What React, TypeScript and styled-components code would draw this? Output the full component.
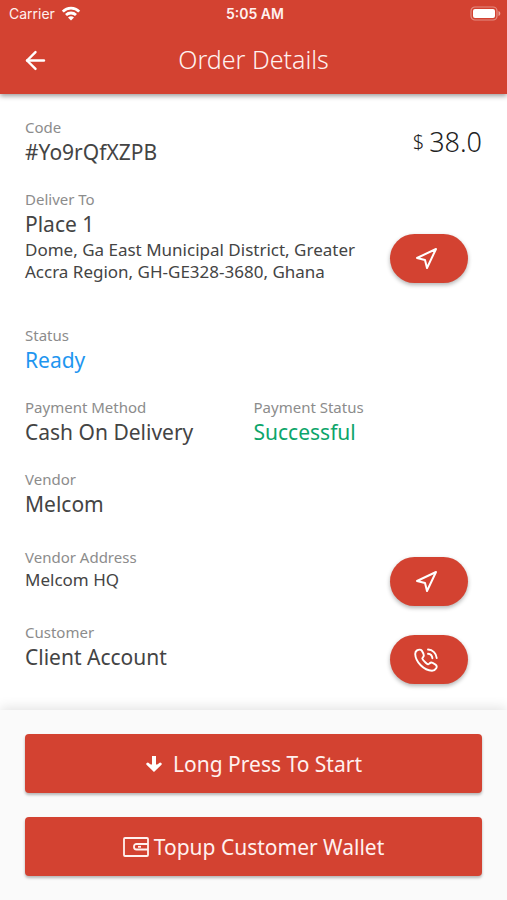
import React from 'react';
import styled, { createGlobalStyle } from 'styled-components';
import { FiArrowLeft, FiNavigation } from 'react-icons/fi';

const brand = '#d34231';
const gutter = '25px';

const GlobalStyle = createGlobalStyle`
  *, *::before, *::after { box-sizing: border-box; }
  body {
    margin: 0;
    background: #fff;
    color: #444;
    font-family: 'Noto Sans', 'Open Sans', sans-serif;
    font-weight: 400;
  }
  button { font: inherit; border: 0; cursor: pointer; }
`;

const Screen = styled.div`
  min-height: 100vh;
  display: flex;
  flex-direction: column;
`;

const Header = styled.header`
  background: ${brand};
  color: #fff1ef;
  box-shadow: 0 2px 5px rgba(0, 0, 0, 0.4);
`;

const StatusBar = styled.div`
  display: grid;
  grid-template-columns: 1fr auto 1fr;
  align-items: center;
  height: 27px;
  padding: 0 6px 0 9px;
  font: 400 14px/20px Inter, sans-serif;
`;

const Carrier = styled.span`
  display: flex;
  align-items: center;
  gap: 6px;
`;

const Clock = styled.time`
  font-weight: 600;
`;

const Battery = styled.svg`
  justify-self: end;
`;

const AppBar = styled.div`
  display: grid;
  grid-template-columns: 48px 1fr 48px;
  align-items: center;
  height: 67px;
  padding: 0 11px;
`;

const BackButton = styled.button`
  display: grid;
  place-items: center;
  width: 48px;
  height: 48px;
  padding: 0;
  background: transparent;
  color: #fff;
`;

const Title = styled.h1`
  margin: 0;
  padding-bottom: 4px;
  text-align: center;
  font-size: 25px;
  line-height: 32px;
  font-weight: 300;
`;

const Details = styled.main`
  flex: 1;
  display: flex;
  flex-direction: column;
  padding: 23px ${gutter};
`;

const Row = styled.section<{ $gap?: number; $center?: boolean }>`
  display: flex;
  justify-content: space-between;
  align-items: ${(p) => (p.$center ? 'center' : 'flex-start')};
  margin-bottom: ${(p) => p.$gap ?? 22}px;
`;

const Columns = styled.section`
  display: grid;
  grid-template-columns: 1fr 1fr;
  margin-bottom: 22px;
`;

const Field = styled.dl`
  flex: 1;
  margin: 0;
  min-width: 0;
`;

const Label = styled.dt`
  padding-bottom: 2px;
  font-size: 15px;
  line-height: 20px;
  color: #8c8c8c;
`;

const Value = styled.dd<{ $tone?: string }>`
  margin: 0;
  padding-bottom: 2px;
  font-size: 21px;
  line-height: 26px;
  color: ${(p) => p.$tone ?? 'inherit'};
`;

const Address = styled.dd`
  margin: 0;
  max-width: 350px;
  font-size: 17px;
  line-height: 22px;
`;

const Price = styled.p`
  display: flex;
  align-items: center;
  gap: 5px;
  margin: 0;
  font-size: 27px;
  line-height: 32px;
  font-weight: 300;
  color: #222;
`;

const Currency = styled.span`
  font-size: 20px;
`;

const PillButton = styled.button<{ $top?: number }>`
  display: grid;
  place-items: center;
  align-self: flex-end;
  flex: none;
  width: 78px;
  height: 49px;
  margin: ${(p) => p.$top ?? 10}px 14px 0 0;
  padding: 0 6px 0 0;
  border-radius: 25px;
  background: ${brand};
  color: #fff;
  box-shadow: 0 2px 4px rgba(0, 0, 0, 0.3);
`;

const Actions = styled.footer`
  display: flex;
  flex-direction: column;
  gap: 24px;
  padding: 24px ${gutter};
  background: #fafafa;
  box-shadow: 0 -2px 12px rgba(0, 0, 0, 0.12);
`;

const ActionButton = styled.button<{ $gap: number }>`
  display: flex;
  align-items: center;
  justify-content: center;
  gap: ${(p) => p.$gap}px;
  height: 59px;
  border-radius: 4px;
  background: ${brand};
  color: #fff1ef;
  font-size: 21px;
  line-height: 28px;
  box-shadow: 0 2px 3px rgba(0, 0, 0, 0.28);
`;

function WifiIcon() {
  return (
    <svg width="20" height="16" viewBox="0 0 20 16" fill="none" stroke="#fff" strokeWidth="2.8" aria-hidden="true">
      <path d="M1.800 5.600C6.300 .9 13.700 .9 18.200 5.600" />
      <path d="M5 9C7.800 6.300 12.200 6.300 15 9" />
      <path d="M10 14.400L7 11.400Q10 8.900 13 11.400Z" fill="#fff" stroke="none" />
    </svg>
  );
}

function BatteryIcon() {
  return (
    <Battery width="31" height="15" viewBox="0 0 31 15" role="img" aria-label="Battery full">
      <rect x="1" y="1" width="26" height="13" rx="4" fill="none" stroke="#fff" strokeOpacity="0.4" strokeWidth="1.200" />
      <rect x="3" y="3" width="22" height="9" rx="2" fill="#fff" />
      <path d="M28.500 5v5c1.200-.5 1.800-1.400 1.800-2.500s-.6-2-1.800-2.500z" fill="#fff" fillOpacity="0.5" />
    </Battery>
  );
}

function PhoneIcon() {
  return (
    <svg width="24" height="24" viewBox="0 0 24 24" fill="none" stroke="currentColor" strokeWidth="1.900" strokeLinecap="round" strokeLinejoin="round" aria-hidden="true">
      <path d="M3 2.400C1.800 3.200 1.200 4.300 1.200 6C1.500 14 10 22.500 18 22.800C20 22.800 21.500 21.500 22.200 20.300C22.900 19 22.800 17.500 21.500 16.600L18.500 14.800C17.300 14.200 16.300 14.600 15.500 15.500C14.600 16.600 13.500 16.400 12 15C10.500 13.600 8.600 12 8.300 10.600C8.200 9.600 9.800 9.200 9.800 7.600C9.800 6.500 8.600 3.800 7.800 2.600C6.800 1.200 4.500 1.400 3 2.400Z" />
      <path d="M14 1.500A9 9 0 0 1 22.700 10" />
      <path d="M14 5.800A5 5 0 0 1 18.400 10.200" />
    </svg>
  );
}

function ArrowDownIcon() {
  return (
    <svg width="18" height="18" viewBox="0 0 18 18" fill="none" stroke="#fff" aria-hidden="true">
      <path d="M9 1v11" strokeWidth="4" />
      <path d="M2.800 9L9 15L15.200 9" strokeWidth="3" strokeLinecap="round" />
      <path d="M4 9.500H14L9 15Z" fill="#fff" stroke="none" />
    </svg>
  );
}

function WalletIcon() {
  return (
    <svg width="26" height="20" viewBox="0 0 26 20" fill="none" stroke="#fff1ef" strokeWidth="1.800" strokeLinejoin="round" aria-hidden="true">
      <rect x="1" y="1" width="24" height="18" rx="1" />
      <path d="M25 7H13.500a2.500 2.500 0 0 0-2.500 2.500v.5a2.500 2.500 0 0 0 2.500 2.500H25" />
      <path d="M15 9.800h3" />
    </svg>
  );
}

export default function App() {
  return (
    <Screen>
      <GlobalStyle />
      <Header>
        <StatusBar>
          <Carrier>Carrier <WifiIcon /></Carrier>
          <Clock>5:05 AM</Clock>
          <BatteryIcon />
        </StatusBar>
        <AppBar>
          <BackButton type="button" aria-label="Back"><FiArrowLeft size={29} /></BackButton>
          <Title>Order Details</Title>
        </AppBar>
      </Header>

      <Details>
        <Row $center>
          <Field><Label>Code</Label><Value>#Yo9rQfXZPB</Value></Field>
          <Price><Currency>$</Currency>38.0</Price>
        </Row>
        <Row $gap={42}>
          <Field>
            <Label>Deliver To</Label>
            <Value>Place 1</Value>
            <Address>Dome, Ga East Municipal District, Greater Accra Region, GH-GE328-3680, Ghana</Address>
          </Field>
          <PillButton type="button" aria-label="Navigate to delivery address"><FiNavigation size={24} /></PillButton>
        </Row>
        <Row>
          <Field><Label>Status</Label><Value $tone="#1e96f0">Ready</Value></Field>
        </Row>
        <Columns>
          <Field><Label>Payment Method</Label><Value>Cash On Delivery</Value></Field>
          <Field><Label>Payment Status</Label><Value $tone="#0da56a">Successful</Value></Field>
        </Columns>
        <Row $gap={28}>
          <Field><Label>Vendor</Label><Value>Melcom</Value></Field>
        </Row>
        <Row $gap={16}>
          <Field><Label>Vendor Address</Label><Address>Melcom HQ</Address></Field>
          <PillButton type="button" aria-label="Navigate to vendor"><FiNavigation size={24} /></PillButton>
        </Row>
        <Row $gap={0}>
          <Field><Label>Customer</Label><Value>Client Account</Value></Field>
          <PillButton type="button" $top={13} aria-label="Call customer"><PhoneIcon /></PillButton>
        </Row>
      </Details>

      <Actions>
        <ActionButton type="button" $gap={10}><ArrowDownIcon />Long Press To Start</ActionButton>
        <ActionButton type="button" $gap={5}><WalletIcon />Topup Customer Wallet</ActionButton>
      </Actions>
    </Screen>
  );
}
